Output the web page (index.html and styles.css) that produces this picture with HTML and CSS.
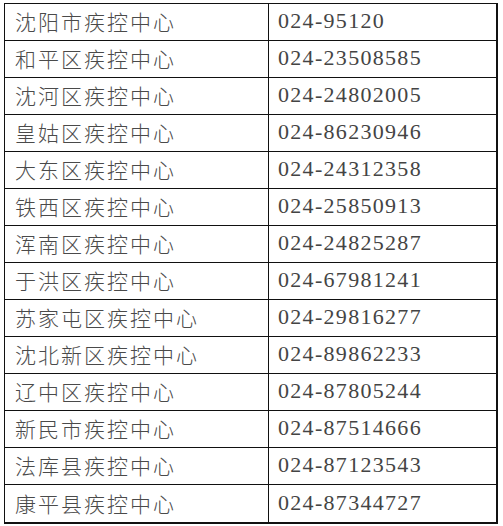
FILE: index.html
```html
<!DOCTYPE html>
<html lang="zh-CN">
<head>
<meta charset="utf-8">
<title>疾控中心电话</title>
<link rel="stylesheet" href="styles.css">
</head>
<body>
<div class="table">
  <div class="cell name">沈阳市疾控中心</div><div class="cell tel">024-95120</div>
  <div class="cell name">和平区疾控中心</div><div class="cell tel">024-23508585</div>
  <div class="cell name">沈河区疾控中心</div><div class="cell tel">024-24802005</div>
  <div class="cell name">皇姑区疾控中心</div><div class="cell tel">024-86230946</div>
  <div class="cell name">大东区疾控中心</div><div class="cell tel">024-24312358</div>
  <div class="cell name">铁西区疾控中心</div><div class="cell tel">024-25850913</div>
  <div class="cell name">浑南区疾控中心</div><div class="cell tel">024-24825287</div>
  <div class="cell name">于洪区疾控中心</div><div class="cell tel">024-67981241</div>
  <div class="cell name">苏家屯区疾控中心</div><div class="cell tel">024-29816277</div>
  <div class="cell name">沈北新区疾控中心</div><div class="cell tel">024-89862233</div>
  <div class="cell name">辽中区疾控中心</div><div class="cell tel">024-87805244</div>
  <div class="cell name">新民市疾控中心</div><div class="cell tel">024-87514666</div>
  <div class="cell name">法库县疾控中心</div><div class="cell tel">024-87123543</div>
  <div class="cell name last">康平县疾控中心</div><div class="cell tel last">024-87344727</div>
</div>
</body>
</html>
```
FILE: styles.css
```css
html, body {
  margin: 0;
  padding: 0;
  background: #ffffff;
}
body {
  padding: 3px 0 0 4px;
}
.table {
  display: grid;
  grid-template-columns: 264px 227px;
  grid-auto-rows: 37px;
  width: max-content;
  border-top: 1px solid #111;
  border-left: 1px solid #111;
  border-right: 2px solid #111;
  border-bottom: 2px solid #111;
}
.cell {
  display: flex;
  align-items: center;
  border-bottom: 1px solid #111;
  white-space: nowrap;
  padding-bottom: 2px;
  box-sizing: border-box;
}
.cell.last {
  border-bottom: none;
}
.name {
  border-right: 1px solid #111;
  padding-left: 10px;
  font-family: "Noto Sans CJK SC", sans-serif;
  font-size: 21px;
  font-weight: 300;
  letter-spacing: 2px;
  color: #4a4a4a;
}
.tel {
  padding-left: 9px;
  font-family: "Liberation Serif", serif;
  font-size: 22px;
  letter-spacing: 1.3px;
  color: #444;
}
```
